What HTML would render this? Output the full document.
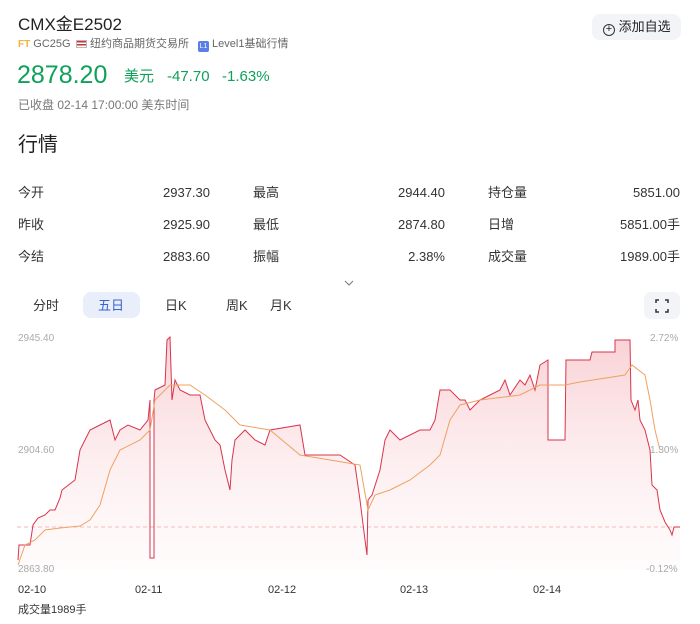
<!DOCTYPE html>
<html><head><meta charset="utf-8"><style>
*{margin:0;padding:0;box-sizing:border-box}
body{width:700px;height:624px;background:#fff;font-family:"Liberation Sans","Noto Sans CJK SC",sans-serif;color:#222;position:relative;overflow:hidden}
.a{position:absolute;white-space:nowrap;line-height:1}
.g{color:#0fa05a}.r{color:#e0343f}
.lbl,.val{font-size:13px;color:#333;line-height:16px;height:16px}
.val{text-align:right;width:100px}
.tab{font-size:13px;color:#333;line-height:16px}
</style></head><body>
<div class="a" style="left:18px;top:16px;font-size:17px;line-height:18px;color:#222">CMX金E2502</div>
<div class="a" style="left:18px;top:38px;font-size:11px;line-height:13px;color:#666"><span style="color:#f4b23f;font-weight:bold;font-size:10px">FT</span> GC25G</div>
<div class="a" style="left:76px;top:38px;font-size:11px;line-height:13px;color:#666"><span style="display:inline-block;width:11px;height:8px;background:linear-gradient(#c33 0 25%,#fff 25% 50%,#c33 50% 75%,#fff 75%);border:1px solid #bbb;vertical-align:-1px"></span> 纽约商品期货交易所</div>
<div class="a" style="left:198px;top:38px;font-size:11px;line-height:13px;color:#666"><span style="display:inline-block;width:11px;height:11px;background:#5b7ee8;border-radius:2px;color:#fff;font-size:7px;text-align:center;line-height:11px;vertical-align:-1px">L1</span> Level1基础行情</div>
<div class="a" style="left:592px;top:14px;width:89px;height:26px;background:#f3f4f7;border-radius:8px;font-size:13px;line-height:26px;padding-left:11px"><span style="display:inline-block;width:12px;height:12px;border:1.3px solid #333;border-radius:50%;text-align:center;line-height:9px;font-size:11px;vertical-align:-1px">+</span> 添加自选</div>
<div class="a g" style="left:17px;top:62px;font-size:25px;line-height:26px">2878.20</div>
<div class="a g" style="left:124px;top:68px;font-size:15px;line-height:17px">美元</div>
<div class="a g" style="left:167px;top:68px;font-size:15px;line-height:17px">-47.70</div>
<div class="a g" style="left:222px;top:68px;font-size:15px;line-height:17px">-1.63%</div>
<div class="a" style="left:18px;top:98px;font-size:12px;line-height:14px;color:#777">已收盘 02-14 17:00:00 美东时间</div>
<div class="a" style="left:18px;top:134px;font-size:20px;line-height:22px;color:#222">行情</div>

<div class="a lbl" style="left:18px;top:185px">今开</div><div class="a val r" style="left:110px;top:185px">2937.30</div>
<div class="a lbl" style="left:253px;top:185px">最高</div><div class="a val r" style="left:345px;top:185px">2944.40</div>
<div class="a lbl" style="left:488px;top:185px">持仓量</div><div class="a val" style="left:580px;top:185px">5851.00</div>
<div class="a lbl" style="left:18px;top:217px">昨收</div><div class="a val" style="left:110px;top:217px">2925.90</div>
<div class="a lbl" style="left:253px;top:217px">最低</div><div class="a val g" style="left:345px;top:217px">2874.80</div>
<div class="a lbl" style="left:488px;top:217px">日增</div><div class="a val" style="left:580px;top:217px">5851.00手</div>
<div class="a lbl" style="left:18px;top:249px">今结</div><div class="a val" style="left:110px;top:249px">2883.60</div>
<div class="a lbl" style="left:253px;top:249px">振幅</div><div class="a val" style="left:345px;top:249px">2.38%</div>
<div class="a lbl" style="left:488px;top:249px">成交量</div><div class="a val" style="left:580px;top:249px">1989.00手</div>
<svg class="a" style="left:344px;top:280px" width="10" height="6" viewBox="0 0 10 6" fill="none" stroke="#777"><path d="M1 1l4 4 4-4"/></svg>

<div class="a tab" style="left:33px;top:298px">分时</div>
<div class="a" style="left:83px;top:292px;width:57px;height:26px;background:#e9eefb;border-radius:8px"></div>
<div class="a tab" style="left:98px;top:298px;color:#3a63d0">五日</div>
<div class="a tab" style="left:165px;top:298px">日K</div>
<div class="a tab" style="left:226px;top:298px">周K</div>
<div class="a tab" style="left:270px;top:298px">月K</div>
<div class="a" style="left:644px;top:292px;width:36px;height:27px;background:#f3f4f7;border-radius:7px"></div>
<svg class="a" style="left:655px;top:299px" width="14" height="14" viewBox="0 0 14 14" fill="none" stroke="#333" stroke-width="1.5"><path d="M1 4V1h3M10 1h3v3M13 10v3h-3M4 13H1v-3"/></svg>

<svg class="a" style="left:0;top:330px" width="700" height="250" viewBox="0 330 700 250">
<defs><linearGradient id="f" x1="0" y1="0" x2="0" y2="1"><stop offset="0" stop-color="#f2a4ac" stop-opacity=".5"/><stop offset="1" stop-color="#fde8ea" stop-opacity=".15"/></linearGradient></defs>
<line x1="17" y1="527" x2="682" y2="527" stroke="#f2b4b4" stroke-dasharray="4 3"/>
<path id="p" fill="url(#f)" stroke="none" d="M18 560L19 545L30 545L33 525L38 518L45 515L50 510L55 510L60 498L62 490L75 480L80 450L85 440L90 430L100 425L110 420L115 440L120 430L128 425L140 430L148 420L150 400L150 558L154 558L154 400L155 390L165 385L167 340L170 337L172 400L175 380L180 390L190 395L200 395L205 420L210 430L215 440L220 445L225 470L230 490L232 460L235 440L245 430L255 440L265 445L270 430L300 425L305 455L340 455L355 465L360 500L365 540L367 555L368 500L372 495L380 470L385 440L390 430L400 440L420 430L430 430L435 420L440 390L450 390L460 400L465 400L470 410L480 400L490 395L500 390L505 380L510 395L520 380L525 385L530 375L535 390L540 365L548 360L548 440L565 440L566 360L590 360L592 352L615 352L615 340L630 340L631 400L635 410L638 400L640 420L645 430L650 450L652 485L657 490L660 510L665 522L670 530L672 535L674 527L680 527L680 570L18 570Z"/>
<path fill="none" stroke="#d9344c" stroke-width="1" d="M18 560L19 545L30 545L33 525L38 518L45 515L50 510L55 510L60 498L62 490L75 480L80 450L85 440L90 430L100 425L110 420L115 440L120 430L128 425L140 430L148 420L150 400L150 558L154 558L154 400L155 390L165 385L167 340L170 337L172 400L175 380L180 390L190 395L200 395L205 420L210 430L215 440L220 445L225 470L230 490L232 460L235 440L245 430L255 440L265 445L270 430L300 425L305 455L340 455L355 465L360 500L365 540L367 555L368 500L372 495L380 470L385 440L390 430L400 440L420 430L430 430L435 420L440 390L450 390L460 400L465 400L470 410L480 400L490 395L500 390L505 380L510 395L520 380L525 385L530 375L535 390L540 365L548 360L548 440L565 440L566 360L590 360L592 352L615 352L615 340L630 340L631 400L635 410L638 400L640 420L645 430L650 450L652 485L657 490L660 510L665 522L670 530L672 535L674 527L680 527"/>
<path fill="none" stroke="#f0a060" stroke-width="1" d="M18 565L25 545L35 540L45 530L60 528L80 526L90 520L100 505L110 470L120 450L140 440L150 430L155 400L170 385L190 385L205 395L225 410L240 425L270 430L300 455L330 460L360 465L368 510L375 495L390 490L410 480L430 465L440 455L450 420L460 405L480 400L520 395L540 385L565 385L580 382L625 375L632 365L645 375L650 400L655 430L660 450"/>
</svg>
<div class="a" style="left:18px;top:334px;font-size:10px;color:#aaa">2945.40</div>
<div class="a" style="left:18px;top:446px;font-size:10px;color:#aaa">2904.60</div>
<div class="a" style="left:18px;top:565px;font-size:10px;color:#aaa">2863.80</div>
<div class="a" style="left:650px;top:334px;font-size:10px;color:#aaa">2.72%</div>
<div class="a" style="left:650px;top:446px;font-size:10px;color:#aaa">1.30%</div>
<div class="a" style="left:646px;top:565px;font-size:10px;color:#aaa">-0.12%</div>
<div class="a" style="left:18px;top:585px;font-size:11px;color:#333">02-10</div>
<div class="a" style="left:135px;top:585px;font-size:11px;color:#333">02-11</div>
<div class="a" style="left:268px;top:585px;font-size:11px;color:#333">02-12</div>
<div class="a" style="left:400px;top:585px;font-size:11px;color:#333">02-13</div>
<div class="a" style="left:533px;top:585px;font-size:11px;color:#333">02-14</div>
<div class="a" style="left:18px;top:605px;font-size:11px;color:#333">成交量1989手</div>
</body></html>
